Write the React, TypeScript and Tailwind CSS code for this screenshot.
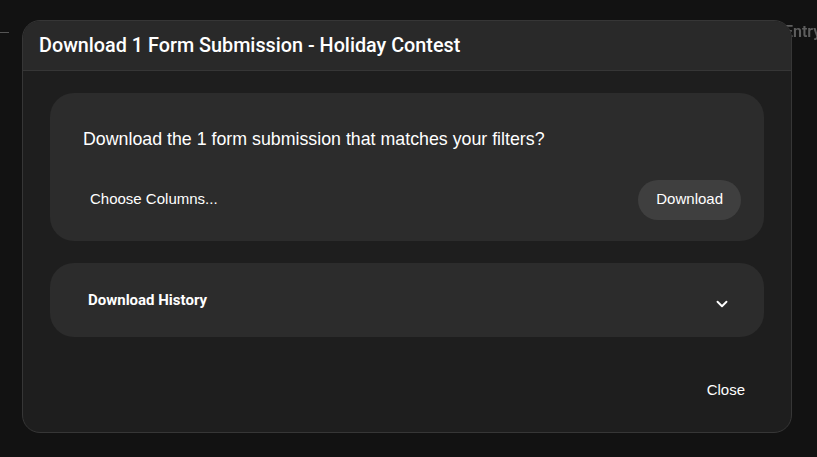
import { ChevronDown } from "lucide-react";

export default function App() {
  return (
    <div
      className="relative h-[457px] w-[817px] overflow-hidden bg-[#121212]"
      style={{ fontFamily: "'Liberation Sans', Arial, sans-serif" }}
    >
      {/* page behind the dialog */}
      <div className="absolute left-0 top-[32px] h-[1px] w-[9px] bg-[#555]" />
      <div className="absolute left-[784px] top-[20px] text-[16px] font-semibold text-[#5e5e5e] blur-[0.6px]" style={{ fontFamily: "Roboto, sans-serif" }}>
        Entry
      </div>

      <div className="absolute left-[22px] top-[20px] flex h-[413px] w-[770px] flex-col overflow-hidden rounded-[18px] border border-[#363636] bg-[#1e1e1e]">
        <div className="flex h-[50px] shrink-0 items-center border-b border-[#363636] bg-[#292929] px-[16px]">
          <h2 className="text-[19.8px] font-medium text-white" style={{ fontFamily: "Roboto, sans-serif" }}>
            Download 1 Form Submission - Holiday Contest
          </h2>
        </div>

        <div className="flex flex-1 flex-col px-[27px] pt-[22px]">
          <div className="flex h-[148px] flex-col rounded-[24px] bg-[#2c2c2c] px-[33px] pt-[33px]">
            <p className="text-[17.8px] text-white">
              Download the 1 form submission that matches your filters?
            </p>
            <div className="mt-[27px] flex items-center justify-between">
              <button className="ml-[7px] text-[15px] text-white">Choose Columns...</button>
              <button className="-mr-[10px] flex h-[40px] items-center rounded-full bg-[#3f3f3f] px-[18px] text-[15px] text-white">
                Download
              </button>
            </div>
          </div>

          <div className="mt-[22px] flex h-[74px] items-center justify-between rounded-[24px] bg-[#2c2c2c] pl-[38px] pr-[33px]">
            <span className="text-[15px] font-bold text-white" style={{ fontFamily: "Roboto, sans-serif" }}>
              Download History
            </span>
            <ChevronDown className="mt-[8px] h-[18px] w-[18px] text-white" strokeWidth={2.5} />
          </div>

          <div className="mt-auto flex justify-end pb-[31px] pr-[19px]">
            <button className="text-[15px] text-white">Close</button>
          </div>
        </div>
      </div>
    </div>
  );
}
